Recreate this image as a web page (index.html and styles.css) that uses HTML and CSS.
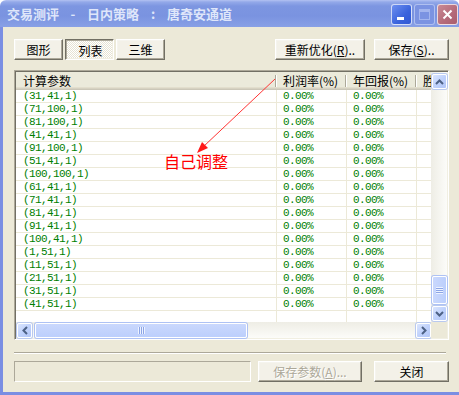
FILE: index.html
```html
<!DOCTYPE html>
<html lang="zh-CN">
<head>
    <meta charset="UTF-8">
    <title>交易测评 - 日内策略 : 唐奇安通道</title>
    <link rel="stylesheet" href="styles.css">
</head>
<body>
    <div class="window">
        <div class="titlebar">
            <span class="title">交易测评<span class="tgap">-</span>日内策略<span class="tgap">:</span>唐奇安通道</span>
            <div class="caption-btns">
                <span class="cbtn min"><span class="min-bar"></span></span>
                <span class="cbtn max"><span class="max-box"></span></span>
                <span class="cbtn close">
                    <svg width="11" height="11" viewBox="0 0 11 11"><path d="M1.5 1.5 L9.5 9.5 M9.5 1.5 L1.5 9.5" stroke="#fff" stroke-width="2"/></svg>
                </span>
            </div>
        </div>

        <div class="client">
            <div class="toolbar">
                <div class="tabs">
                    <button class="btn tab">图形</button>
                    <button class="btn tab pressed">列表</button>
                    <button class="btn tab">三维</button>
                </div>
                <div class="actions">
                    <button class="btn reopt">重新优化(<u>R</u>)..</button>
                    <button class="btn save">保存(<u>S</u>)..</button>
                </div>
            </div>

            <div class="listview">
                <div class="grid">
                    <div class="row hdr">
                        <span class="cell">计算参数</span>
                        <span class="cell">利润率(%)</span>
                        <span class="cell">年回报(%)</span>
                        <span class="cell">胜</span>
                    </div>
                    <div class="row"><span class="cell">(31,41,1)</span><span class="cell">0.00%</span><span class="cell">0.00%</span><span class="cell"></span></div>
                    <div class="row"><span class="cell">(71,100,1)</span><span class="cell">0.00%</span><span class="cell">0.00%</span><span class="cell"></span></div>
                    <div class="row"><span class="cell">(81,100,1)</span><span class="cell">0.00%</span><span class="cell">0.00%</span><span class="cell"></span></div>
                    <div class="row"><span class="cell">(41,41,1)</span><span class="cell">0.00%</span><span class="cell">0.00%</span><span class="cell"></span></div>
                    <div class="row"><span class="cell">(91,100,1)</span><span class="cell">0.00%</span><span class="cell">0.00%</span><span class="cell"></span></div>
                    <div class="row"><span class="cell">(51,41,1)</span><span class="cell">0.00%</span><span class="cell">0.00%</span><span class="cell"></span></div>
                    <div class="row"><span class="cell">(100,100,1)</span><span class="cell">0.00%</span><span class="cell">0.00%</span><span class="cell"></span></div>
                    <div class="row"><span class="cell">(61,41,1)</span><span class="cell">0.00%</span><span class="cell">0.00%</span><span class="cell"></span></div>
                    <div class="row"><span class="cell">(71,41,1)</span><span class="cell">0.00%</span><span class="cell">0.00%</span><span class="cell"></span></div>
                    <div class="row"><span class="cell">(81,41,1)</span><span class="cell">0.00%</span><span class="cell">0.00%</span><span class="cell"></span></div>
                    <div class="row"><span class="cell">(91,41,1)</span><span class="cell">0.00%</span><span class="cell">0.00%</span><span class="cell"></span></div>
                    <div class="row"><span class="cell">(100,41,1)</span><span class="cell">0.00%</span><span class="cell">0.00%</span><span class="cell"></span></div>
                    <div class="row"><span class="cell">(1,51,1)</span><span class="cell">0.00%</span><span class="cell">0.00%</span><span class="cell"></span></div>
                    <div class="row"><span class="cell">(11,51,1)</span><span class="cell">0.00%</span><span class="cell">0.00%</span><span class="cell"></span></div>
                    <div class="row"><span class="cell">(21,51,1)</span><span class="cell">0.00%</span><span class="cell">0.00%</span><span class="cell"></span></div>
                    <div class="row"><span class="cell">(31,51,1)</span><span class="cell">0.00%</span><span class="cell">0.00%</span><span class="cell"></span></div>
                    <div class="row"><span class="cell">(41,51,1)</span><span class="cell">0.00%</span><span class="cell">0.00%</span><span class="cell"></span></div>
                    <div class="row filler"><span class="cell"></span><span class="cell"></span><span class="cell"></span><span class="cell"></span></div>
                </div>

                <div class="vscroll">
                    <span class="sb-btn">
                        <svg width="9" height="6" viewBox="0 0 9 6"><path d="M1 5 L4.5 1.5 L8 5" fill="none" stroke="#4d6185" stroke-width="2"/></svg>
                    </span>
                    <span class="thumb v-thumb"><span class="grip-v"></span></span>
                    <span class="sb-btn">
                        <svg width="9" height="6" viewBox="0 0 9 6"><path d="M1 1 L4.5 4.5 L8 1" fill="none" stroke="#4d6185" stroke-width="2"/></svg>
                    </span>
                </div>

                <div class="hscroll">
                    <span class="sb-btn">
                        <svg width="6" height="9" viewBox="0 0 6 9"><path d="M5 1 L1.5 4.5 L5 8" fill="none" stroke="#4d6185" stroke-width="2"/></svg>
                    </span>
                    <span class="thumb h-thumb"><span class="grip-h"></span></span>
                    <span class="sb-btn right">
                        <svg width="6" height="9" viewBox="0 0 6 9"><path d="M1 1 L4.5 4.5 L1 8" fill="none" stroke="#4d6185" stroke-width="2"/></svg>
                    </span>
                </div>

                <div class="corner"></div>
            </div>

            <div class="sep"></div>

            <div class="footer">
                <div class="status"></div>
                <button class="btn disabled">保存参数(<u>A</u>)...</button>
                <button class="btn close-btn">关闭</button>
            </div>
        </div>

        <!-- red annotation drawn on top of the list -->
        <svg class="note-arrow" width="459" height="395" viewBox="0 0 459 395">
            <line x1="275" y1="79" x2="203" y2="147" stroke="#ff3333" stroke-width="1"/>
            <polygon points="197,153 208,148 202,142" fill="#ff1a1a"/>
        </svg>
        <div class="note-text">自己调整</div>
    </div>
</body>
</html>
```

FILE: styles.css
```css
* {
    margin: 0;
    padding: 0;
    box-sizing: border-box;
}

body {
    background: #fff;
    font-family: "Noto Sans CJK SC", "Liberation Sans", sans-serif;
    font-size: 12px;
    color: #000;
}

.window {
    position: relative;
    width: 459px;
    height: 395px;
    display: flex;
    flex-direction: column;
}

/* Title bar */
.titlebar {
    height: 27px;
    flex: none;
    display: flex;
    justify-content: space-between;
    padding: 0 1px 0 7px;
    border-radius: 6px 6px 0 0;
    background: linear-gradient(to bottom, #b3c2f2 0, #93a9e9 2px, #7d96e1 6px, #7a93e0 16px, #88a0e6 100%);
}

.title {
    align-self: center;
    color: #dfe6fa;
    font-weight: bold;
    font-size: 13px;
    line-height: 16px;
    white-space: nowrap;
}

.tgap {
    display: inline-block;
    width: 28px;
    text-align: center;
}

.caption-btns {
    display: flex;
    gap: 2px;
    margin-top: 4px;
}

.cbtn {
    width: 21px;
    height: 21px;
    border-radius: 3px;
    border: 1px solid rgba(255, 255, 255, 0.75);
    display: flex;
    align-items: center;
    justify-content: center;
}

.cbtn.min {
    background: linear-gradient(135deg, #6d8ff0, #3a63dc 60%, #3158d4);
    align-items: flex-end;
    justify-content: flex-start;
    padding: 0 0 4px 5px;
}

.min-bar {
    width: 7px;
    height: 3px;
    background: #fff;
}

.cbtn.max {
    background: #7b93e2;
    border-color: rgba(190, 204, 244, 0.8);
}

.max-box {
    width: 11px;
    height: 11px;
    border: 1px solid #a3b5ee;
    border-top-width: 3px;
}

.cbtn.close {
    background: linear-gradient(135deg, #c98a95, #b46a79 60%, #a95e6e);
}

/* Client area */
.client {
    flex: 1;
    display: flex;
    flex-direction: column;
    background: #ece9d8;
    border-left: 3px solid #7a8ee3;
    border-bottom: 3px solid #7a8ee3;
    padding: 12px 10px 0 11px;
}

.toolbar {
    height: 21px;
    display: flex;
    justify-content: space-between;
}

.tabs,
.actions {
    display: flex;
}

.tabs {
    gap: 2px;
}

.actions {
    gap: 9px;
}

.btn {
    height: 21px;
    font-family: "Noto Sans CJK SC", "Liberation Sans", sans-serif;
    font-size: 12px;
    line-height: 15px;
    color: #000;
    background: #f3f1e8;
    border: 1px solid;
    border-color: #fff #716f64 #716f64 #fff;
    box-shadow: inset -1px -1px #aca899, inset 1px 1px #f5f4ee;
}

.btn u {
    text-decoration: underline;
}

.tab {
    width: 49px;
}

.tab.pressed {
    border-color: #716f64 #fff #fff #716f64;
    box-shadow: inset 1px 1px #aca899, inset -1px -1px #f1efe2;
    background: repeating-conic-gradient(#fff 0 25%, #e6e3d3 0 50%) 0 0 / 2px 2px;
    padding: 1px 0 0 2px;
}

.reopt {
    width: 90px;
}

.save {
    width: 75px;
}

/* List view */
.listview {
    margin-top: 10px;
    height: 270px;
    border: 1px solid;
    border-color: #aca899 #fff #fff #aca899;
    box-shadow: inset 1px 1px #716f64, inset -1px -1px #f1efe2;
    padding: 1px;
    background: #fff;
    display: grid;
    grid-template-columns: 1fr 16px;
    grid-template-rows: 1fr 16px;
}

.grid {
    overflow: hidden;
    display: flex;
    flex-direction: column;
    background: #fff;
}

.row {
    display: grid;
    grid-template-columns: 261px 70px 70px 70px;
    height: 13px;
    flex: none;
}

.row .cell {
    border-right: 1px solid #ece9d8;
    border-bottom: 1px solid #ece9d8;
    padding-left: 6px;
    color: #008000;
    font-family: "Liberation Mono", monospace;
    font-size: 11px;
    letter-spacing: -0.6px;
    line-height: 12px;
    white-space: nowrap;
    overflow: hidden;
}

.row .cell:first-child {
    padding-left: 7px;
}

.row.filler {
    flex: 1;
}

.row.filler .cell {
    border-bottom: none;
}

.row.hdr {
    height: 18px;
}

.row.hdr .cell {
    border: none;
    color: #000;
    font-family: "Noto Sans CJK SC", "Liberation Sans", sans-serif;
    font-size: 12px;
    letter-spacing: 0;
    line-height: 17px;
    background:
        linear-gradient(#aca899, #aca899) right 1px top 3px / 1px 13px no-repeat,
        linear-gradient(#fff, #fff) right 0 top 3px / 1px 13px no-repeat,
        #ebeadb;
    box-shadow: inset 0 -1px #cbc7b8, inset 0 -2px #d6d2c2, inset 0 -3px #e2decd;
}

/* Scroll bars */
.vscroll {
    display: flex;
    flex-direction: column;
    padding: 2px 0 1px 1px;
    background: linear-gradient(to right, #eeede5, #fcfcf9);
}

.hscroll {
    display: flex;
    padding: 1px 0 0 1px;
    background: linear-gradient(to bottom, #eeede5, #fcfcf9);
}

.sb-btn {
    width: 15px;
    height: 15px;
    flex: none;
    display: flex;
    align-items: center;
    justify-content: center;
    border-radius: 2px;
    border: 1px solid #fff;
    background: linear-gradient(135deg, #dbe5fd, #c0d2fc 50%, #b2c6f7);
    box-shadow: 0 0 0 1px #b9c9ef;
}

.sb-btn.right {
    margin-left: auto;
}

.thumb {
    display: flex;
    align-items: center;
    justify-content: center;
    border-radius: 2px;
    border: 1px solid #fff;
    box-shadow: 0 0 0 1px #aec2f4;
}

.v-thumb {
    height: 28px;
    margin: auto 0 2px;
    background: linear-gradient(to right, #cad8fd, #bccffc);
}

.h-thumb {
    width: 212px;
    margin-left: 3px;
    height: 15px;
    background: linear-gradient(to bottom, #cad8fd, #bccffc);
}

.grip-v {
    width: 7px;
    height: 7px;
    background: repeating-linear-gradient(to bottom, #eef3ff 0 1px, #8ca5e6 1px 2px);
}

.grip-h {
    width: 7px;
    height: 7px;
    background: repeating-linear-gradient(to right, #eef3ff 0 1px, #8ca5e6 1px 2px);
}

.corner {
    background: #ece9d8;
}

/* Bottom */
.sep {
    margin: 12px 3px 0 0;
    height: 2px;
    border-top: 1px solid #aca899;
    border-bottom: 1px solid #fff;
}

.footer {
    margin-top: 7px;
    display: flex;
    height: 21px;
}

.status {
    width: 237px;
    border: 1px solid;
    border-color: #aca899 #fff #fff #aca899;
}

.btn.disabled {
    width: 104px;
    margin-left: 7px;
    color: #aca899;
    text-shadow: 1px 1px #fff;
}

.close-btn {
    width: 75px;
    margin-left: 12px;
}

/* Annotation */
.note-arrow {
    position: absolute;
    top: 0;
    left: 0;
    pointer-events: none;
}

.note-text {
    position: absolute;
    left: 164px;
    top: 151px;
    color: #ff0000;
    font-size: 16px;
    line-height: 20px;
}
```
